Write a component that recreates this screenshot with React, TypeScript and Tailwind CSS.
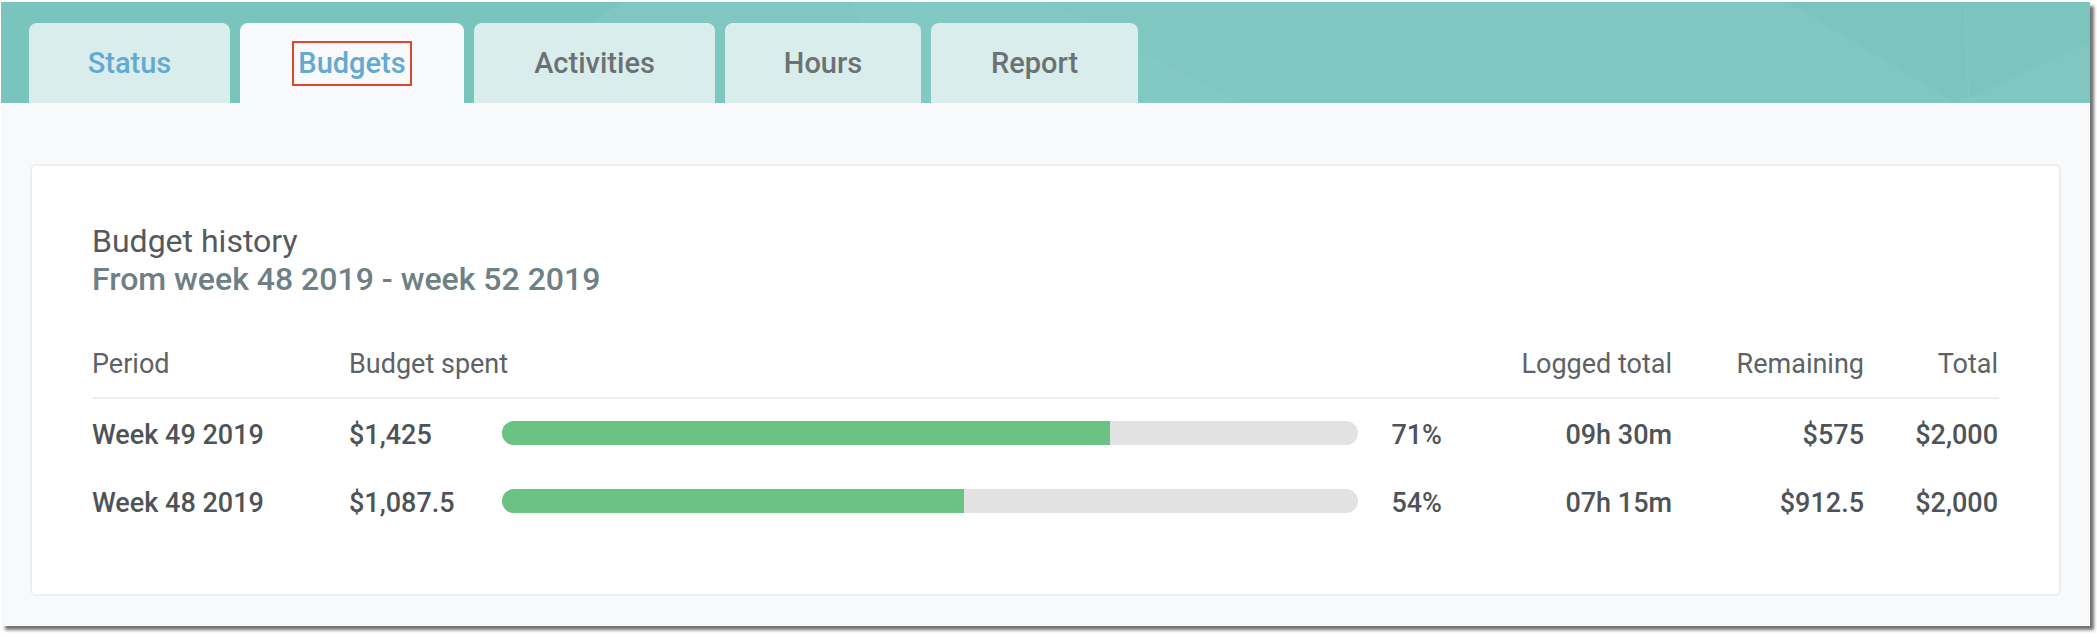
import React from "react";

const TABS = [
  { label: "Status", width: "w-[201px]", text: "text-[#63a9d3]", bg: "bg-[#d9eeec]", marked: false },
  { label: "Budgets", width: "w-[224px]", text: "text-[#63a9d3]", bg: "bg-[#f8f9fb]", marked: true },
  { label: "Activities", width: "w-[241px]", text: "text-[#6c7273]", bg: "bg-[#d9eeec]", marked: false },
  { label: "Hours", width: "w-[196px]", text: "text-[#6c7273]", bg: "bg-[#d9eeec]", marked: false },
  { label: "Report", width: "w-[207px]", text: "text-[#6c7273]", bg: "bg-[#d9eeec]", marked: false },
];

const ROWS = [
  { period: "Week 49 2019", spent: "$1,425", pct: 71, logged: "09h 30m", remaining: "$575", total: "$2,000" },
  { period: "Week 48 2019", spent: "$1,087.5", pct: 54, logged: "07h 15m", remaining: "$912.5", total: "$2,000" },
];

const COLS = "grid grid-cols-[257px_153px_856px_84px_230px_192px_134px]";

function HeaderArt() {
  // faint facets in the teal banner
  return (
    <svg className="absolute inset-0 h-full w-full" viewBox="0 0 2089 101" preserveAspectRatio="none">
      <polygon points="0,0 620,0 470,101 0,101" fill="#74c2bb" opacity="0.5" />
      <polygon points="850,0 1050,0 1240,101 900,101" fill="#86cac5" opacity="0.45" />
      <polygon points="1787,0 2089,0 2089,40 1955,101" fill="#78c2bc" opacity="0.55" />
      <polygon points="1964,101 2089,40 2089,101" fill="#80c6c1" />
      <line x1="1964" y1="0" x2="1968" y2="101" stroke="#85c9c4" strokeWidth="1" />
    </svg>
  );
}

export default function App() {
  return (
    <div className="h-[637px] w-[2097px] bg-white pl-px pt-[2px] font-[Roboto,sans-serif]">
      <div className="flex h-[624px] w-[2089px] flex-col bg-[#f8f9fb] shadow-[4px_4px_3px_rgba(0,0,0,0.55)]">
        <div className="relative flex h-[101px] items-end gap-[10px] bg-[#80c6c1] pl-[28px]">
          <HeaderArt />
          {TABS.map((tab) => (
            <div
              key={tab.label}
              className={`relative z-10 flex h-[80px] items-center justify-center rounded-t-[8px] ${tab.width} ${tab.bg}`}
            >
              {tab.marked ? (
                <span className={`border-2 border-[#e4432c] px-[4px] py-[4px] text-[29px] leading-[33px] font-medium ${tab.text}`}>
                  {tab.label}
                </span>
              ) : (
                <span className={`text-[29px] leading-[33px] font-medium ${tab.text}`}>{tab.label}</span>
              )}
            </div>
          ))}
        </div>

        <div className="mx-[29px] mt-[61px] rounded-[6px] border-2 border-[#eceef0] bg-white px-[60px] pt-[56px] pb-[59px]">
          <h2 className="text-[32px] leading-[38px] text-[#55595d]">Budget history</h2>
          <p className="text-[32px] leading-[38px] font-medium text-[#6e7f86]">From week 48 2019 - week 52 2019</p>

          <div className="mt-[50px]">
            <div className={`${COLS} border-b-2 border-[#eceef0] pb-[17px] text-[27px] leading-[32px] text-[#5d6266]`}>
              <span>Period</span>
              <span className="col-span-3">Budget spent</span>
              <span className="text-right">Logged total</span>
              <span className="text-right">Remaining</span>
              <span className="text-right">Total</span>
            </div>

            {ROWS.map((row) => (
              <div
                key={row.period}
                className={`${COLS} h-[68px] items-center text-[27px] leading-[32px] font-medium text-[#4e5358]`}
              >
                <span className="pt-[4px]">{row.period}</span>
                <span className="pt-[4px]">{row.spent}</span>
                <div className="h-[24px] overflow-hidden rounded-full bg-[#e2e2e2]">
                  <div className="h-full bg-[#6ac383]" style={{ width: `${row.pct}%` }} />
                </div>
                <span className="pt-[4px] text-right">{row.pct}%</span>
                <span className="pt-[4px] text-right">{row.logged}</span>
                <span className="pt-[4px] text-right">{row.remaining}</span>
                <span className="pt-[4px] text-right">{row.total}</span>
              </div>
            ))}
          </div>
        </div>
      </div>
    </div>
  );
}
